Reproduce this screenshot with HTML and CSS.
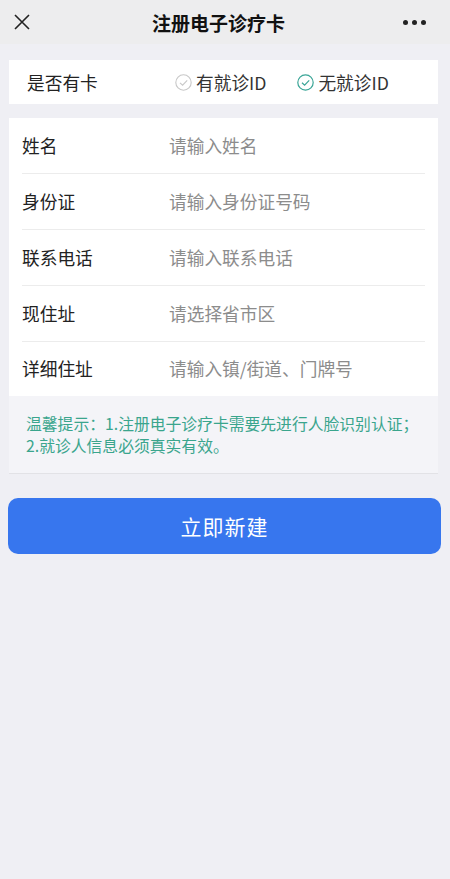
FILE: index.html
```html
<!DOCTYPE html>
<html lang="zh-CN">
<head>
  <meta charset="UTF-8" />
  <title>注册电子诊疗卡</title>
  <link rel="stylesheet" href="styles.css">
</head>
<body>

  <div class="topbar">
    <span class="close">
      <svg width="16" height="16" viewBox="0 0 16 16"><path d="M1 1L15 15M15 1L1 15" stroke="#222" stroke-width="1.6" fill="none"/></svg>
    </span>
    <h1>注册电子诊疗卡</h1>
    <span class="more"><i></i><i></i><i></i></span>
  </div>

  <div class="card has-card">
    <span class="label">是否有卡</span>
    <div class="options">
      <label class="option">
        <svg class="tick" width="17" height="17" viewBox="0 0 17 17"><circle cx="8.5" cy="8.5" r="7.7" stroke="#c8c8c8" stroke-width="1.1" fill="none"/><path d="M5 8.8L7.6 11.2L12.2 6.3" stroke="#c8c8c8" stroke-width="1.1" fill="none"/></svg>
        有就诊ID
      </label>
      <label class="option">
        <svg class="tick" width="17" height="17" viewBox="0 0 17 17"><circle cx="8.5" cy="8.5" r="7.7" stroke="#3aa597" stroke-width="1.2" fill="none"/><path d="M5 8.8L7.6 11.2L12.2 6.3" stroke="#3aa597" stroke-width="1.2" fill="none"/></svg>
        无就诊ID
      </label>
    </div>
  </div>

  <div class="card form">
    <div class="row"><span class="label">姓名</span><input type="text" placeholder="请输入姓名" /></div>
    <div class="row"><span class="label">身份证</span><input type="text" placeholder="请输入身份证号码" /></div>
    <div class="row"><span class="label">联系电话</span><input type="text" placeholder="请输入联系电话" /></div>
    <div class="row"><span class="label">现住址</span><input type="text" placeholder="请选择省市区" /></div>
    <div class="row"><span class="label">详细住址</span><input type="text" placeholder="请输入镇/街道、门牌号" /></div>
  </div>

  <div class="tips">
    温馨提示：1.注册电子诊疗卡需要先进行人脸识别认证；<br>2.就诊人信息必须真实有效。
  </div>

  <button type="button" class="submit">立即新建</button>

</body>
</html>
```

FILE: styles.css
```css
body {
  margin: 0;
  background: #efeff4;
  font-family: "Noto Sans CJK SC", "Noto Sans", sans-serif;
  color: #222;
}

.topbar {
  height: 44px;
  background: #ededee;
  display: flex;
  align-items: center;
  justify-content: space-between;
  padding: 0 24px 0 14px;
}

.topbar h1 {
  margin: 0;
  font-size: 19px;
  font-weight: 700;
  color: #111;
}

.close {
  display: flex;
  width: 20px;
}

.more {
  display: flex;
  gap: 4px;
}

.more i {
  width: 5px;
  height: 5px;
  border-radius: 50%;
  background: #222;
}

.card {
  background: #fff;
  margin: 0 12px 0 9px;
}

.has-card {
  margin-top: 16px;
  height: 44px;
  display: flex;
  align-items: center;
  padding-left: 18px;
  font-size: 17.7px;
}

.has-card .label {
  width: 148px;
}

.options {
  display: flex;
  gap: 31px;
}

.option {
  display: flex;
  align-items: center;
  gap: 4px;
  color: #333;
}

.form {
  margin-top: 14px;
  padding: 0 13px;
}

.row {
  height: 56px;
  display: flex;
  align-items: center;
  border-bottom: 1px solid #ececec;
  font-size: 17.7px;
  padding-bottom: 2px;
  box-sizing: border-box;
}

.row:last-child {
  height: 54px;
  border-bottom: none;
}

.row .label {
  width: 147px;
  color: #222;
}

.row input {
  flex: 1;
  border: none;
  outline: none;
  font: inherit;
  padding: 0;
  background: transparent;
}

.row input::placeholder {
  color: #8c8c8c;
}

.tips {
  margin: 0 12px 0 9px;
  background: #f4f4f8;
  border-bottom: 1px solid #e2e2e6;
  padding: 17px 10px 16px 17px;
  font-size: 15.8px;
  line-height: 22px;
  color: #3aa58d;
}

.submit {
  display: block;
  margin: 24px 9px 0 8px;
  width: calc(100% - 17px);
  height: 56px;
  border: none;
  border-radius: 10px;
  background: #3776ee;
  color: #fff;
  font-family: inherit;
  font-size: 21px;
  letter-spacing: 1px;
}
```
